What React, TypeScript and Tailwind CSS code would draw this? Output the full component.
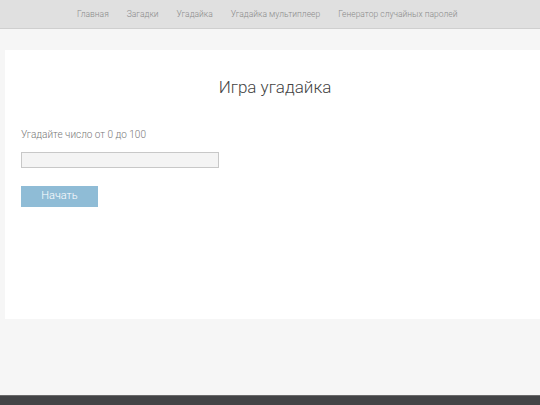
import React from 'react'

const links = ['Главная', 'Загадки', 'Угадайка', 'Угадайка мультиплеер', 'Генератор случайных паролей']

export default function App() {
  return (
    <div className="min-h-[405px] h-[405px] flex flex-col bg-[#f6f6f6] overflow-hidden font-['Roboto',sans-serif] font-light">
      <nav className="h-[29px] shrink-0 bg-[#e0e0e0] border-b border-[#cfcfcf] flex items-center pl-[77px] gap-[18px] text-[8.5px] text-[#8a8a8a]">
        {links.map(l => (
          <a key={l} className="whitespace-nowrap leading-none">{l}</a>
        ))}
      </nav>
      <div className="flex-1 pt-[21px]">
        <div className="ml-[5px] w-[540px] h-[269px] bg-white px-[16px] pt-[27px]">
          <h1 className="text-[17px] text-[#444] text-center leading-[20px]">Игра угадайка</h1>
          <p className="mt-[32px] text-[10px] text-[#777] leading-[12px]">Угадайте число от 0 до 100</p>
          <input className="block mt-[11px] w-[198px] h-[16px] bg-[#f4f4f4] border border-[#c8c8c8] outline-none" />
          <button className="block mt-[18px] w-[77px] h-[21px] bg-[#8fbcd6] text-white text-[11px] font-light">Начать</button>
        </div>
      </div>
      <footer className="h-[10px] shrink-0 bg-[#434446] border-t border-[#6a6a6a]" />
    </div>
  )
}
